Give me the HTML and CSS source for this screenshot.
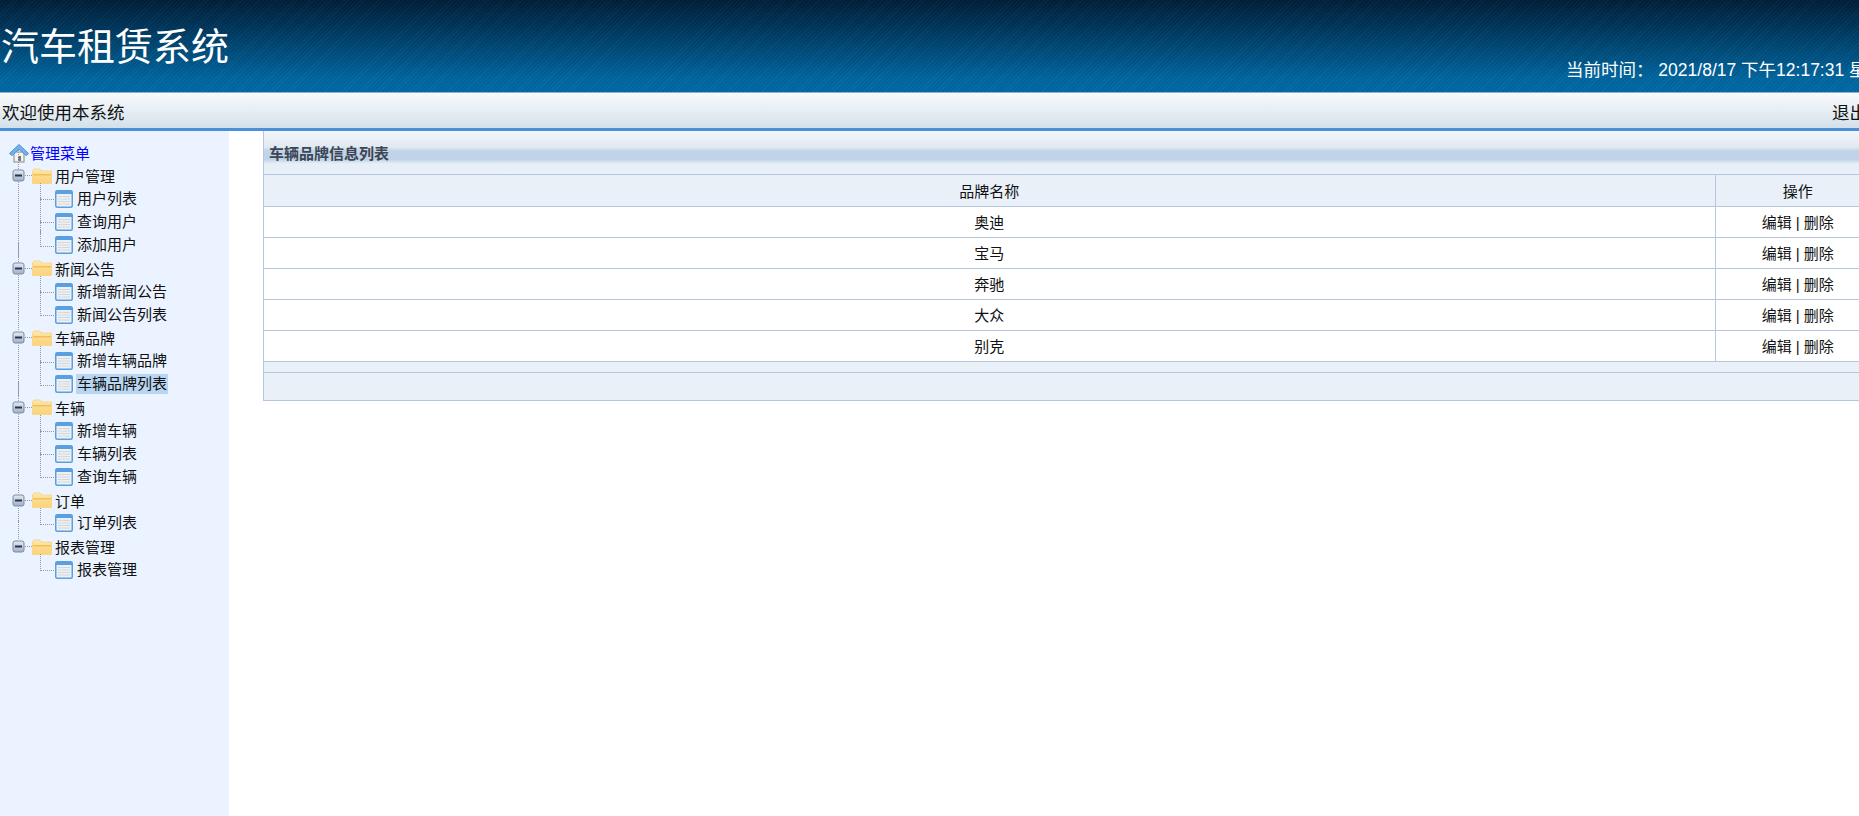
FILE: index.html
```html
<!DOCTYPE html>
<html lang="zh-CN">
<head>
<meta charset="utf-8">
<title>汽车租赁系统</title>
<link rel="stylesheet" href="styles.css">
</head>
<body>
<svg class="defs" width="0" height="0" aria-hidden="true">
  <defs>
    <linearGradient id="gf" x1="0" y1="0" x2="0" y2="1"><stop offset="0" stop-color="#ffe9b0"/><stop offset="0.45" stop-color="#fbdc90"/><stop offset="1" stop-color="#fbd27a"/></linearGradient>
    <linearGradient id="gb" x1="0" y1="0" x2="0" y2="1"><stop offset="0" stop-color="#e4eaf4"/><stop offset="1" stop-color="#9fb0cb"/></linearGradient>
    <symbol id="i-home" viewBox="0 0 20 20">
      <rect x="5" y="9" width="10" height="10" fill="#f2f2f2" stroke="#8a8a8a"/>
      <rect x="9" y="13" width="3" height="5" fill="#777"/>
      <path d="M0.500 10.500 10 1.500l9.500 9-2.500 2-7-6.500-7 6.500z" fill="#74b2ef" stroke="#4b8fd6"/>
    </symbol>
    <symbol id="i-box" viewBox="0 0 13 13">
      <rect x="1" y="1" width="11" height="11" rx="2" fill="url(#gb)" stroke="#7c8ba3"/>
      <rect x="3" y="5.500" width="7" height="2" fill="#2a3442"/>
    </symbol>
    <symbol id="i-folder" viewBox="0 0 20 16">
      <path d="M0.500 3 2 1h6l1 2h10.500v12.500H0.500z" fill="url(#gf)" stroke="#f7d78e"/>
      <rect x="1" y="6" width="18" height="1.500" fill="#f3bf58"/>
    </symbol>
    <symbol id="i-page" viewBox="0 0 18 18">
      <rect x="0.750" y="0.750" width="16.500" height="16.500" rx="1.500" fill="#eef1f4" stroke="#5a9fdf" stroke-width="1.500"/>
      <rect x="1" y="1" width="16" height="3" fill="#5aa0e0"/>
      <path d="M3 6.500h12M3 9h12M3 11.500h12M3 14h12" stroke="#d0d6db"/>
      <path d="M7 5.500v9.500" stroke="#e8ebee"/>
    </symbol>
  </defs>
</svg>
<div class="page">
  <header class="masthead">
    <h1 class="brand">汽车租赁系统</h1>
    <div class="clock">当前时间：&nbsp;2021/8/17 下午12:17:31 星期二</div>
  </header>
  <div class="welcome">
    <span>欢迎使用本系统</span>
    <a class="logout">退出</a>
  </div>
  <div class="body-row">
    <nav class="sidebar">
      <div class="tree-root"><svg class="ic-home"><use href="#i-home"/></svg><a class="root-link">管理菜单</a></div>
      <ul class="tree">
        <li class="group">
          <div class="folder"><svg class="ic-box"><use href="#i-box"/></svg><i class="dash"></i><svg class="ic-folder"><use href="#i-folder"/></svg><span>用户管理</span></div>
          <ul class="leaves">
            <li class="leaf"><svg class="ic-page"><use href="#i-page"/></svg><span>用户列表</span></li>
            <li class="leaf"><svg class="ic-page"><use href="#i-page"/></svg><span>查询用户</span></li>
            <li class="leaf"><svg class="ic-page"><use href="#i-page"/></svg><span>添加用户</span></li>
          </ul>
        </li>
        <li class="group">
          <div class="folder"><svg class="ic-box"><use href="#i-box"/></svg><i class="dash"></i><svg class="ic-folder"><use href="#i-folder"/></svg><span>新闻公告</span></div>
          <ul class="leaves">
            <li class="leaf"><svg class="ic-page"><use href="#i-page"/></svg><span>新增新闻公告</span></li>
            <li class="leaf"><svg class="ic-page"><use href="#i-page"/></svg><span>新闻公告列表</span></li>
          </ul>
        </li>
        <li class="group">
          <div class="folder"><svg class="ic-box"><use href="#i-box"/></svg><i class="dash"></i><svg class="ic-folder"><use href="#i-folder"/></svg><span>车辆品牌</span></div>
          <ul class="leaves">
            <li class="leaf"><svg class="ic-page"><use href="#i-page"/></svg><span>新增车辆品牌</span></li>
            <li class="leaf"><svg class="ic-page"><use href="#i-page"/></svg><span class="current">车辆品牌列表</span></li>
          </ul>
        </li>
        <li class="group">
          <div class="folder"><svg class="ic-box"><use href="#i-box"/></svg><i class="dash"></i><svg class="ic-folder"><use href="#i-folder"/></svg><span>车辆</span></div>
          <ul class="leaves">
            <li class="leaf"><svg class="ic-page"><use href="#i-page"/></svg><span>新增车辆</span></li>
            <li class="leaf"><svg class="ic-page"><use href="#i-page"/></svg><span>车辆列表</span></li>
            <li class="leaf"><svg class="ic-page"><use href="#i-page"/></svg><span>查询车辆</span></li>
          </ul>
        </li>
        <li class="group">
          <div class="folder"><svg class="ic-box"><use href="#i-box"/></svg><i class="dash"></i><svg class="ic-folder"><use href="#i-folder"/></svg><span>订单</span></div>
          <ul class="leaves">
            <li class="leaf"><svg class="ic-page"><use href="#i-page"/></svg><span>订单列表</span></li>
          </ul>
        </li>
        <li class="group">
          <div class="folder"><svg class="ic-box"><use href="#i-box"/></svg><i class="dash"></i><svg class="ic-folder"><use href="#i-folder"/></svg><span>报表管理</span></div>
          <ul class="leaves">
            <li class="leaf"><svg class="ic-page"><use href="#i-page"/></svg><span>报表管理</span></li>
          </ul>
        </li>
      </ul>
    </nav>
    <main class="content">
      <div class="panel">
        <div class="panel-title">车辆品牌信息列表</div>
        <table class="grid">
          <thead>
            <tr><th class="col-name">品牌名称</th><th class="col-op">操作</th></tr>
          </thead>
          <tbody>
            <tr><td>奥迪</td><td>编辑 | 删除</td></tr>
            <tr><td>宝马</td><td>编辑 | 删除</td></tr>
            <tr><td>奔驰</td><td>编辑 | 删除</td></tr>
            <tr><td>大众</td><td>编辑 | 删除</td></tr>
            <tr><td>别克</td><td>编辑 | 删除</td></tr>
          </tbody>
        </table>
        <div class="gap"></div>
        <div class="panel-foot"></div>
      </div>
    </main>
  </div>
</div>
</body>
</html>
```

FILE: styles.css
```css
* { box-sizing: border-box; }
html, body { margin: 0; height: 100%; overflow: hidden; background: #fff; }
body { font-family: "Liberation Sans", "Noto Sans CJK SC", sans-serif; color: #111; }
.defs { display: block; height: 0; }
ul { list-style: none; margin: 0; padding: 0; }

.page { width: 1880px; height: 816px; display: flex; flex-direction: column; }

.masthead {
  height: 93px;
  flex: none;
  display: flex;
  justify-content: space-between;
  align-items: flex-start;
  border-bottom: 1px solid #8fb0cd;
  color: #fff;
  background:
    repeating-linear-gradient(135deg, rgba(255,255,255,.03) 0 1px, rgba(0,0,0,.03) 1px 3px),
    linear-gradient(#001f38, #00365c 30%, #00669f 85%, #0069a9);
}
.brand { margin: 23px 0 0 1px; font-size: 38px; line-height: 48px; font-weight: 400; }
.clock { margin: 58px 0 0 0; width: 314px; font-size: 17.500px; line-height: 24px; white-space: nowrap; }

.welcome {
  height: 38px;
  flex: none;
  display: flex;
  justify-content: space-between;
  align-items: center;
  padding: 2px 13px 0 2px;
  font-size: 17.500px;
  border-bottom: 3px solid #4a90d9;
  background: linear-gradient(#f8fafc, #e7eef4 50%, #d3e0ea);
}
.logout { color: #111; }

.body-row { flex: 1; display: flex; min-height: 0; }

.sidebar { width: 229px; flex: none; background: #eaf3ff; padding-top: 10px; font-size: 15px; }
.tree-root { height: 23px; display: flex; align-items: center; padding-left: 9px; }
.ic-home { width: 20px; height: 20px; flex: none; margin-right: 1px; }
.root-link { color: #0000ff; }

.tree { position: relative; }
.group { position: relative; }
.group::before {
  content: "";
  position: absolute;
  left: 18px;
  top: -14px;
  bottom: 0;
  border-left: 1px dotted #999;
}
.group:last-child::before { bottom: auto; height: 26px; }

.folder { position: relative; height: 23.200px; display: flex; align-items: center; padding-left: 12px; }
.ic-box { width: 13px; height: 13px; flex: none; background: #eaf3ff; }
.dash { width: 7px; flex: none; border-top: 1px dotted #999; }
.ic-folder { width: 20px; height: 16px; flex: none; margin-right: 3px; }

.leaf { position: relative; height: 23.200px; display: flex; align-items: center; padding-left: 55px; }
.leaf::before {
  content: "";
  position: absolute;
  left: 40px;
  top: -4px;
  height: 16px;
  width: 15px;
  border-left: 1px dotted #999;
  border-bottom: 1px dotted #999;
}
.leaf::after {
  content: "";
  position: absolute;
  left: 40px;
  top: 11px;
  height: 13px;
  border-left: 1px dotted #999;
}
.leaf:last-child::after { display: none; }
.ic-page { width: 18px; height: 18px; flex: none; margin-right: 3px; }
.leaf span { padding: 0 1px; line-height: 20px; }
.current { background: #b8d6f2; }

.content { flex: 1; min-width: 0; padding: 0 0 0 34px; }
.panel { border-left: 1px solid #b4c6e0; }

.panel-title {
  height: 44px;
  padding: 5px 0 0 5px;
  font-size: 15px;
  line-height: 36px;
  font-weight: 700;
  color: #3c4654;
  background: linear-gradient(#f2f6fa 0, #e0e9f1 38%, #c2d4e8 46%, #bfd2e7 66%, #e6eef6 76%, #eaf1f8 100%);
  border-bottom: 1px solid #b4c6e0;
}

.grid { width: 100%; border-collapse: collapse; table-layout: fixed; font-size: 15px; }
.grid th, .grid td {
  height: 31px;
  padding: 0;
  text-align: center;
  font-weight: 400;
  border-bottom: 1px solid #b4c6e0;
}
.grid th { background: #e9f0f8; }
.grid td { background: #fff; }
.col-op { width: 165px; }
.grid th + th, .grid td + td { border-left: 1px solid #b4c6e0; }

.gap { height: 11px; background: #e9f0f8; border-bottom: 1px solid #b4c6e0; }
.panel-foot { height: 28px; background: #e9f0f8; border-bottom: 1px solid #b4c6e0; }
```
